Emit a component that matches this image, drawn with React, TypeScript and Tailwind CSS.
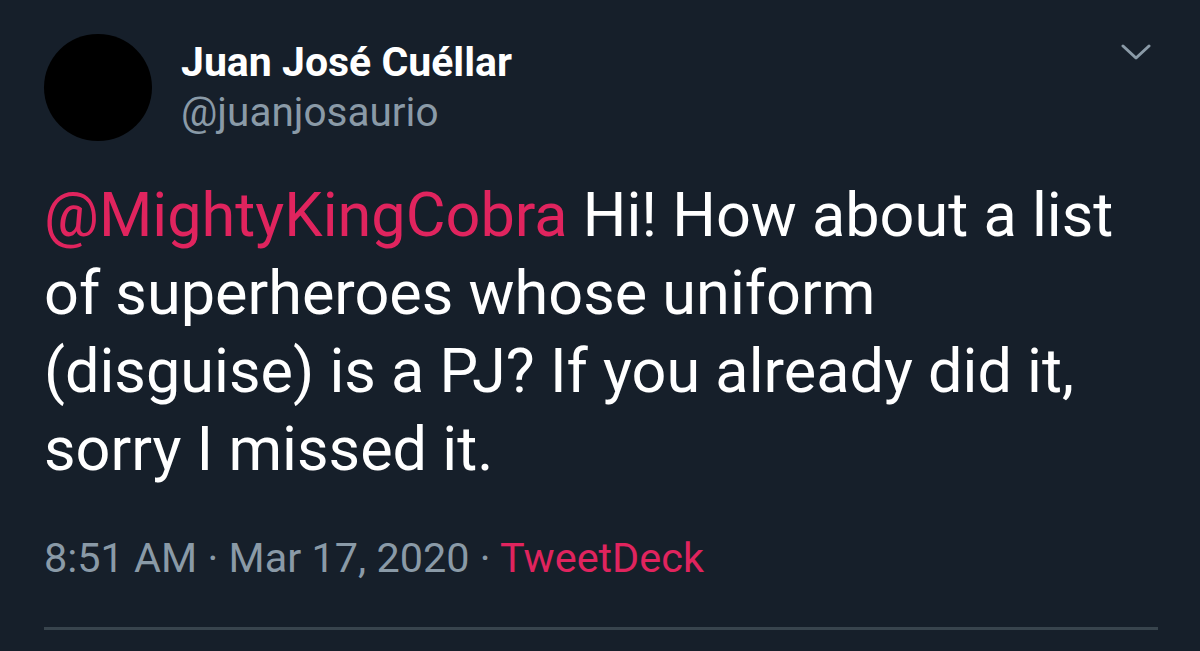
export default function App() {
  return (
    <div className="w-[1200px] h-[651px] bg-[#161f2a] overflow-hidden relative" style={{ fontFamily: "Roboto, 'Liberation Sans', sans-serif" }}>
      <div className="pl-[44px] pr-[42px] pt-[34px]">
        <div className="flex items-start">
          <div className="w-[108px] h-[107px] rounded-full bg-black shrink-0" />
          <div className="ml-[29px] pt-[3px] flex-1">
            <div className="text-white font-bold text-[41px] leading-[50px]">Juan José Cuéllar</div>
            <div className="text-[#8a9aa7] text-[40.5px] leading-[50px]">@juanjosaurio</div>
          </div>
          <svg width="30" height="18" viewBox="0 0 30 18" className="mt-[9px] mr-[7px]" fill="none" stroke="#8a9aa7" strokeWidth="3" strokeLinecap="round" strokeLinejoin="round">
            <path d="M2 3 L15 15 L28 3" />
          </svg>
        </div>
        <div className="mt-[35px] text-white text-[61.2px] leading-[78px] whitespace-nowrap">
          <div><span className="text-[#e0245e]">@MightyKingCobra</span> Hi! How about a list</div>
          <div>of superheroes whose uniform</div>
          <div>(disguise) is a PJ? If you already did it,</div>
          <div>sorry I missed it.</div>
        </div>
        <div className="mt-[45px] text-[41.4px] leading-[50px] text-[#8a9aa7] whitespace-nowrap">
          8:51 AM · Mar 17, 2020 · <span className="text-[#e0245e]">TweetDeck</span>
        </div>
        <div className="mt-[44px] h-[3px] bg-[#38444d]" />
      </div>
    </div>
  );
}
